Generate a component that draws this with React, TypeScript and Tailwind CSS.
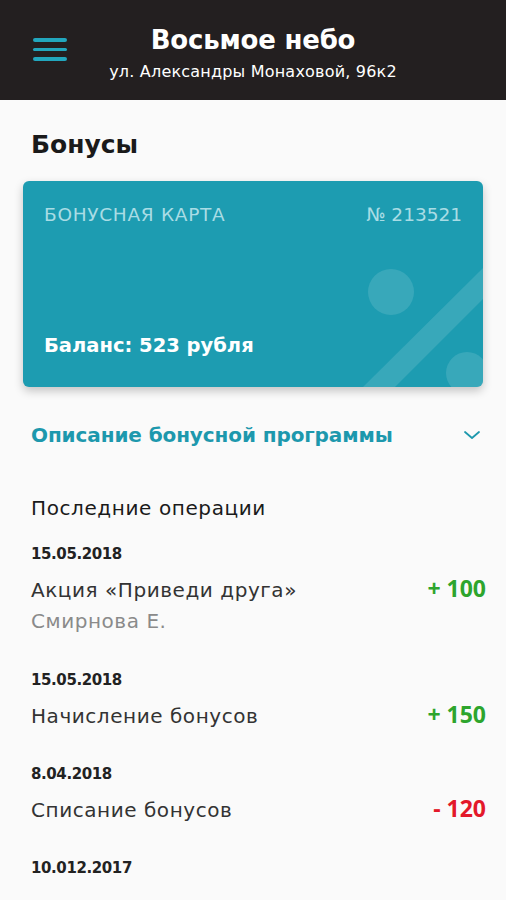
import React from "react";

const font = { fontFamily: '"DejaVu Sans", "Open Sans", sans-serif' };
const amountFont = { fontFamily: '"Open Sans", "Noto Sans", sans-serif' };

function Op({ date, title, sub, amount, positive }: { date: string; title: string; sub?: string; amount: string; positive: boolean }) {
  return (
    <div className={"flex flex-col " + (sub ? "mb-[34px]" : "mb-[22px]")}>
      <div className="h-[30px] flex items-center text-[15px] font-semibold text-[#222] tracking-[-0.4px]">{date}</div>
      <div className="flex items-center justify-between h-[42px]">
        <span className="text-[20px] text-[#333] tracking-[0.55px]">{title}</span>
        <span style={amountFont} className={"text-[23px] font-bold -mt-[4px] " + (positive ? "text-[#2da52d]" : "text-[#e3192a]")}>{amount}</span>
      </div>
      {sub && <div className="h-[20px] flex items-center text-[20px] text-[#8a8a8a] tracking-[0.55px]">{sub}</div>}
    </div>
  );
}

export default function App() {
  return (
    <div style={font} className="w-[506px] h-[900px] bg-[#fafafa] overflow-hidden">
      <header className="h-[100px] bg-[#231f20] relative flex flex-col items-center pt-[25px]">
        <div className="absolute left-[33px] top-[38px] flex flex-col gap-[6px]">
          <div className="w-[34px] h-[3.5px] rounded-full bg-[#22a6bd]" />
          <div className="w-[34px] h-[3.5px] rounded-full bg-[#22a6bd]" />
          <div className="w-[34px] h-[3.5px] rounded-full bg-[#22a6bd]" />
        </div>
        <div className="text-white text-[26px] font-bold leading-[30px] tracking-[-0.2px]">Восьмое небо</div>
        <div className="text-white text-[16px] leading-[20px] mt-[7px] tracking-[0.2px]">ул. Александры Монаховой, 96к2</div>
      </header>

      <div className="px-[31px] pt-[27px] h-[81px]">
        <div className="text-[25px] font-bold text-[#1a1a1a] leading-[36px]">Бонусы</div>
      </div>

      <div className="mx-[23px] h-[206px] rounded-[6px] bg-[#1d9cb1] shadow-[0_4px_10px_rgba(0,0,0,0.22)] relative overflow-hidden px-[21px] pt-[20px] pb-[27px] flex flex-col justify-between">
        <svg className="absolute inset-0" width="461" height="206" viewBox="0 0 461 206">
          <circle cx="368" cy="111" r="23" fill="rgba(255,255,255,0.12)" />
          <circle cx="444" cy="192" r="21" fill="rgba(255,255,255,0.12)" />
          <polygon points="340,206 372,206 461,117 461,86" fill="rgba(255,255,255,0.12)" />
        </svg>
        <div className="relative flex justify-between text-[18.5px] text-[#a9dce5] leading-[28px] tracking-[0.7px]">
          <span>БОНУСНАЯ КАРТА</span>
          <span className="tracking-[0px]">№ 213521</span>
        </div>
        <div className="relative text-white text-[19.5px] font-bold leading-[28px]">Баланс: 523 рубля</div>
      </div>

      <div className="flex items-center justify-between pl-[31px] pr-[25px] mt-[30px] h-[36px]">
        <span className="text-[20px] font-semibold text-[#1d98ad] tracking-[-0.1px]">Описание бонусной программы</span>
        <svg width="18" height="10" viewBox="0 0 18 10" fill="none">
          <path d="M2 2 L9 8 L16 2" stroke="#1d98ad" strokeWidth="1.8" strokeLinecap="round" strokeLinejoin="round" />
        </svg>
      </div>

      <div className="px-[31px] pr-[20px] mt-[39px]">
        <div className="text-[20px] text-[#1a1a1a] h-[32px] flex items-center mb-[15px] tracking-[0.6px]">Последние операции</div>
        <div className="flex flex-col">
          <Op date="15.05.2018" title="Акция «Приведи друга»" sub="Смирнова Е." amount="+ 100" positive />
          <Op date="15.05.2018" title="Начисление бонусов" amount="+ 150" positive />
          <Op date="8.04.2018" title="Списание бонусов" amount="- 120" positive={false} />
          <Op date="10.012.2017" title="" amount="" positive />
        </div>
      </div>
    </div>
  );
}
